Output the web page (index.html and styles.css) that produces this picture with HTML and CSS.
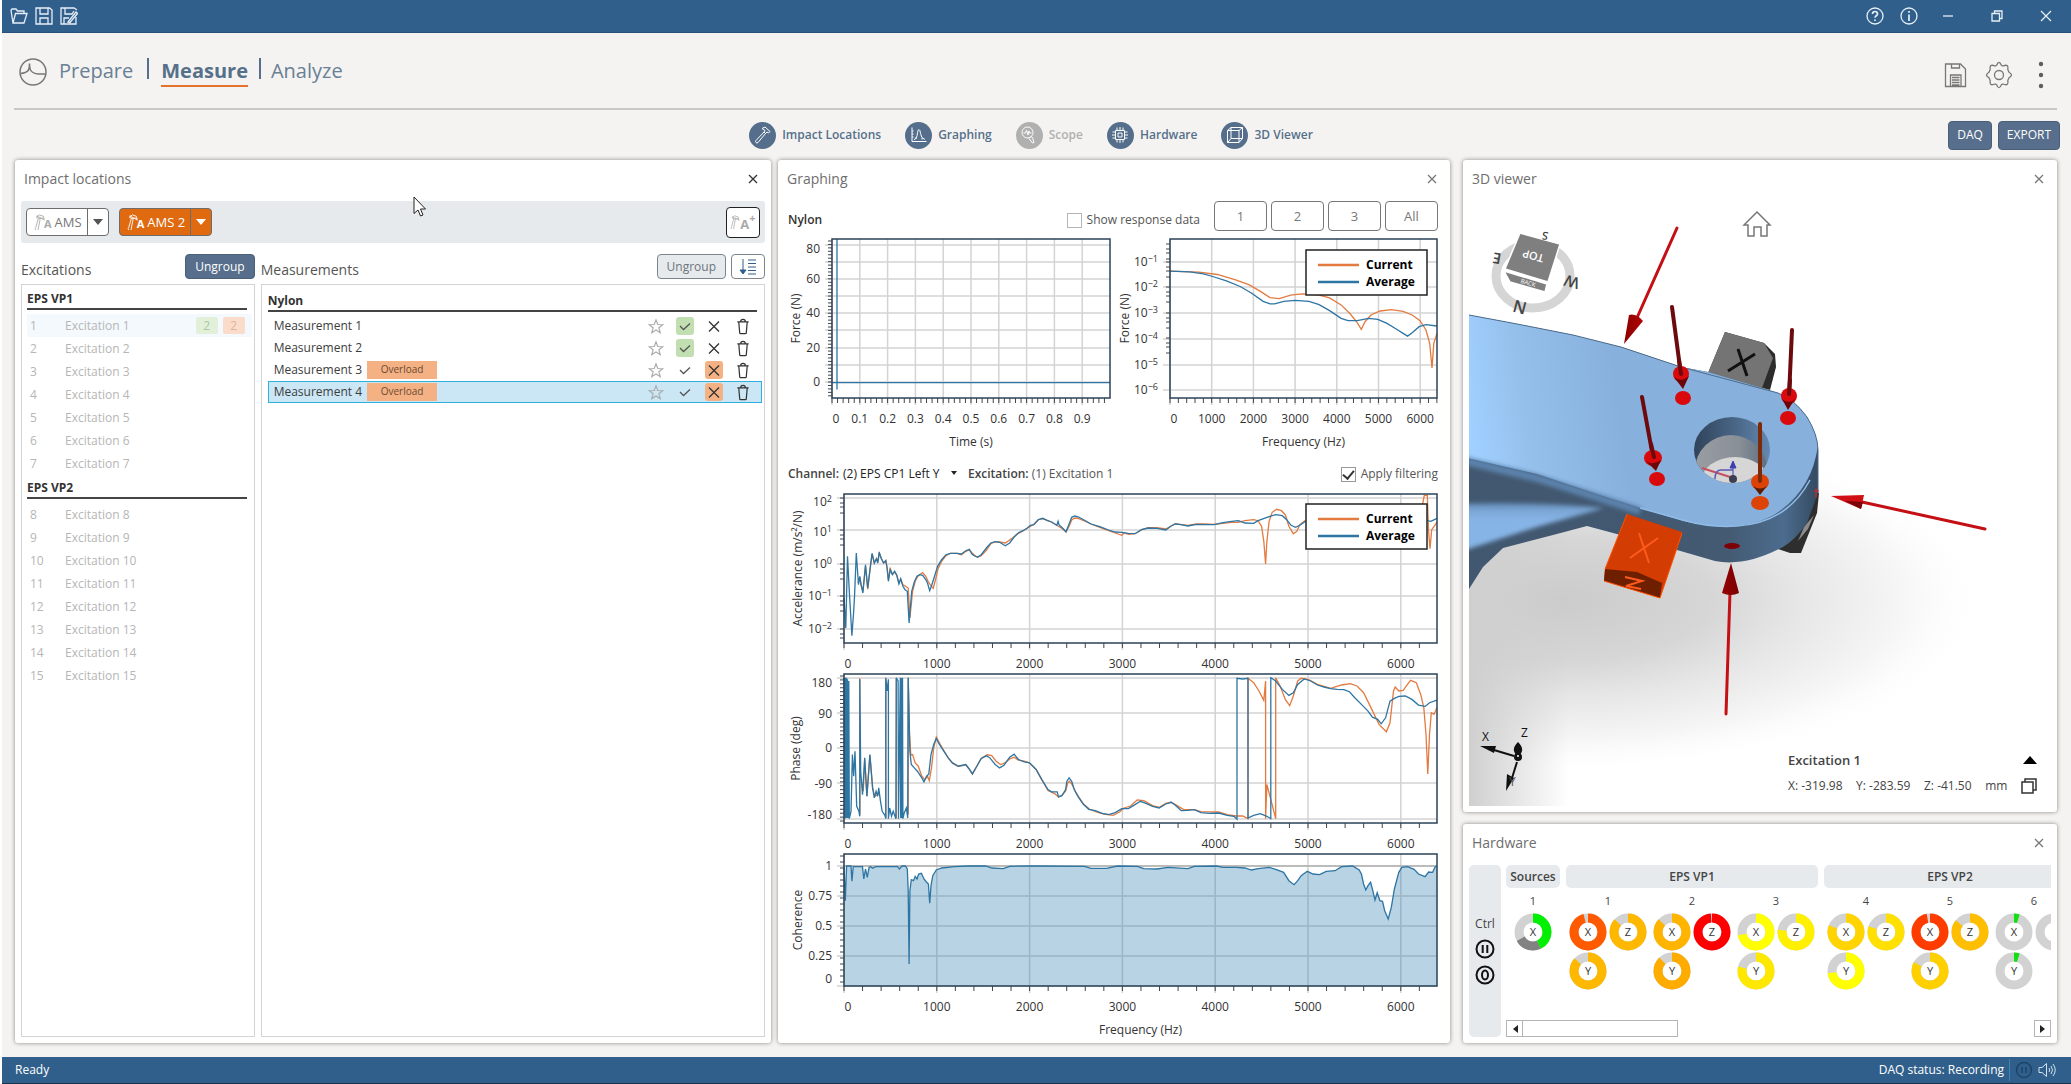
FILE: index.html
```html
<!DOCTYPE html>
<html lang="en">
<head>
<meta charset="utf-8">
<title>Measure</title>
<link rel="stylesheet" href="styles.css">
</head>
<body>
<svg class="defs" aria-hidden="true">
  <symbol id="i-close" viewBox="0 0 10 10"><path d="M1 1l8 8M9 1L1 9"/></symbol>
  <symbol id="i-star" viewBox="0 0 18 18"><path d="M9 1.500l2 5.300 5.600.2-4.400 3.500 1.600 5.500L9 12.900 4.200 16l1.600-5.500L1.400 7l5.600-.2z"/></symbol>
  <symbol id="i-check" viewBox="0 0 16 16"><path d="M3 7.500l3.500 3.500 6.500-6"/></symbol>
  <symbol id="i-cross" viewBox="0 0 16 16"><path d="M3 3l10 10M13 3L3 13"/></symbol>
  <symbol id="i-trash" viewBox="0 0 16 18"><path d="M2 4h12M3.500 4l1 11.500q0 1 1 1h5q1 0 1-1l1-11.500M5.500 4q0-2.500 2.500-2.500t2.500 2.500"/></symbol>
  <symbol id="i-hammer" viewBox="0 0 18 18"><path d="M2 16.500q-1-1 0-2l8-8.500 1.500 1.500-7.500 9q-1 1-2 0zM8 2.500l3-1.500 5 4.500-1.500 1.500-1.500-1-1.500 1.500-1.500-1.500 1-1.500z"/></symbol>
  <symbol id="i-hamA" viewBox="0 0 18 20"><path d="M2 19q-1.500-1.500 0-3L5 5.500M4.500 19L7 6M2.500 4.500L6 2l4.500 1.500 1 3.500-2-1.500-4 .5zM3 3l9 5"/></symbol>
</svg>

<header class="titlebar">
  <div class="tb-group">
    <button class="tb-btn" aria-label="Open"><svg width="18" height="16" viewBox="0 0 18 16"><path d="M3 15L1 2.500 2 1h4l1.500 2H14v2.500M3 15h11l3-9.500H5.500z"/></svg></button>
    <button class="tb-btn" aria-label="Save"><svg width="18" height="18" viewBox="0 0 18 18"><path d="M1 1h13.500L17 3v14H1zM5 1v6h8V1M5 17v-6h8v6"/></svg></button>
    <button class="tb-btn" aria-label="Save as"><svg width="18" height="18" viewBox="0 0 18 18"><path d="M16 10v7H1V1h13l3 2M5 1v6h7l2-3M4 17v-6h5M8 15l8-10 1.500 1.500-7.500 9z"/></svg></button>
  </div>
  <div class="tb-group tb-right">
    <button class="tb-btn" aria-label="Help"><svg width="20" height="20" viewBox="0 0 20 20"><circle cx="10" cy="10" r="8"/><path d="M7.500 8q0-2.500 2.500-2.500T12.500 8q0 1-1.200 1.800T10 11.700M10 13.500v1.500" stroke-width="1.700"/></svg></button>
    <button class="tb-btn tb-info" aria-label="About"><svg width="20" height="20" viewBox="0 0 20 20"><circle cx="10" cy="10" r="8"/><path d="M10 8.500V15M10 5v1.800" stroke-width="1.700"/></svg></button>
    <button class="tb-btn tb-win" aria-label="Minimize"><svg width="12" height="12" viewBox="0 0 12 12"><path d="M1 6h10"/></svg></button>
    <button class="tb-btn tb-win" aria-label="Restore"><svg width="12" height="12" viewBox="0 0 12 12"><path d="M1 3.500h7.500V11H1zM3.500 3.500V1H11v7.500H8.500"/></svg></button>
    <button class="tb-btn tb-win" aria-label="Close"><svg width="12" height="12" viewBox="0 0 12 12"><path d="M1 1l10 10M11 1L1 11"/></svg></button>
  </div>
</header>

<div class="head">
  <nav class="modes">
    <svg class="logo" width="28" height="28" viewBox="0 0 28 28"><circle cx="14" cy="14" r="13"/><path d="M1.500 15.500q6-.5 8-3.500 1-2 1-6.500 0 4.500 1 6.500 2 3.500 8 4h7"/></svg>
    <a href="#">Prepare</a><i></i><a href="#" class="on">Measure</a><i></i><a href="#">Analyze</a>
  </nav>
  <div class="head-tools">
    <button aria-label="Save project"><svg width="24" height="26" viewBox="0 0 24 26"><path d="M1.500 2h15l5 5v17.500h-20zM7.500 2v4h8V2M6.500 24.500V13h10.500v11.500M8 15.500h7.500M8 18h7.500M8 20.500h7.500M8 23h7.500"/></svg></button>
    <button aria-label="Settings"><svg width="28" height="28" viewBox="0 0 28 28"><circle cx="14" cy="14" r="4.500"/><path d="M11.600 4.300Q14-1.500 16.400 4.300L18 5Q24 2.500 22.800 8.500L24 11.200Q29 14 24 16.800L22.800 19.500Q24 25.500 18 23L16.400 23.700Q14 29.500 11.600 23.700L10 23Q4 25.500 5.200 19.500L4 16.800Q-1 14 4 11.200L5.200 8.500Q4 2.500 10 5z"/></svg></button>
    <button class="more" aria-label="More"><svg width="8" height="28" viewBox="0 0 8 28"><g fill="#5e5e5e" stroke="none"><circle cx="4" cy="3" r="2.200"/><circle cx="4" cy="14" r="2.200"/><circle cx="4" cy="25" r="2.200"/></g></svg></button>
  </div>
</div>

<div class="toolbar">
  <div class="views">
    <button><span class="disc"><svg width="18" height="18"><use href="#i-hammer"/></svg></span>Impact Locations</button>
    <button><span class="disc"><svg width="18" height="18" viewBox="0 0 18 18"><path d="M2 1.500v14h14.500M2 5h1.500M2 8h1.500M2 11h1.500M4 13.500q3 0 3.500-7 .5-3 1.500-3t1.500 4q.5 5 4.500 6M6 11v2M12 12v1.500"/></svg></span>Graphing</button>
    <button class="off" disabled><span class="disc"><svg width="18" height="18" viewBox="0 0 18 18"><circle cx="7.500" cy="6.500" r="5.500"/><path d="M11 10.500l1.500 1 1.500 5-1.500.5-3.500-4.500zM3.500 7h2l1-3 1.500 5 1-4 .7 2h1.800"/></svg></span>Scope</button>
    <button><span class="disc"><svg width="18" height="18" viewBox="0 0 18 18"><path d="M4.500 4.500h9v9h-9zM7 7h4v4H7zM6 1.500v3M9 1v3.500M12 1.500v3M6 13.500v3M9 13.500V17M12 13.500v3M1.500 6h3M1 9h3.500M1.500 12h3M13.500 6h3M13.500 9H17M13.500 12h3"/></svg></span>Hardware</button>
    <button><span class="disc"><svg width="18" height="18" viewBox="0 0 18 18"><path d="M1.500 4.500h11.500v12H1.500zM5 1.500h11.500v11H5zM1.500 4.500L5 1.500M13 4.500l3.500-3M1.500 16.500l3.500-4M13 16.500l3.500-4"/></svg></span>3D Viewer</button>
  </div>
  <div class="actions"><button class="solid">DAQ</button><button class="solid">EXPORT</button></div>
</div>

<main class="board">
  <section class="panel">
    <div class="panel-head active"><h2>Impact locations</h2><button aria-label="Close impact locations"><svg width="10" height="10"><use href="#i-close"/></svg></button></div>
    <div class="sets">
      <div class="split"><button><svg width="16" height="18"><use href="#i-hamA"/></svg><b>A</b>AMS</button><button aria-label="AMS menu"><svg width="12" height="8" viewBox="0 0 12 8"><path d="M1 1h10L6 7z"/></svg></button></div>
      <div class="split hot"><button><svg width="16" height="18"><use href="#i-hamA"/></svg><b>A</b>AMS 2</button><button aria-label="AMS 2 menu"><svg width="12" height="8" viewBox="0 0 12 8"><path d="M1 1h10L6 7z"/></svg></button></div>
      <button class="add" aria-label="Add set"><svg width="14" height="18"><use href="#i-hamA"/></svg><b>A</b><sup>+</sup></button>
    </div>
    <div class="lists">
      <div class="col-exc">
        <div class="list-head"><h3>Excitations</h3><button class="solid small">Ungroup</button></div>
        <div class="box">
          <h4>EPS VP1</h4>
          <ol class="exc">
            <li class="cur"><i>1</i>Excitation 1<span class="n ok">2</span><span class="n bad">2</span></li>
            <li><i>2</i>Excitation 2</li><li><i>3</i>Excitation 3</li><li><i>4</i>Excitation 4</li>
            <li><i>5</i>Excitation 5</li><li><i>6</i>Excitation 6</li><li><i>7</i>Excitation 7</li>
          </ol>
          <h4>EPS VP2</h4>
          <ol class="exc">
            <li><i>8</i>Excitation 8</li><li><i>9</i>Excitation 9</li><li><i>10</i>Excitation 10</li><li><i>11</i>Excitation 11</li>
            <li><i>12</i>Excitation 12</li><li><i>13</i>Excitation 13</li><li><i>14</i>Excitation 14</li><li><i>15</i>Excitation 15</li>
          </ol>
        </div>
      </div>
      <div class="col-meas">
        <div class="list-head"><h3>Measurements</h3><button class="flat small">Ungroup</button><button class="sort" aria-label="Sort"><svg width="20" height="18" viewBox="0 0 20 18"><path d="M5 1v14M2 12l3 4 3-4z" fill="#2f5f8b"/><path d="M10 2h8M10 5.500h8M10 9h8M10 12.500h8M10 16h8"/></svg></button></div>
        <div class="box">
          <h4>Nylon</h4>
          <ul class="meas">
            <li>Measurement 1<span class="acts good"><button aria-label="Star"><svg><use href="#i-star"/></svg></button><button aria-label="Accept"><svg><use href="#i-check"/></svg></button><button aria-label="Reject"><svg><use href="#i-cross"/></svg></button><button aria-label="Delete"><svg><use href="#i-trash"/></svg></button></span></li>
            <li>Measurement 2<span class="acts good"><button aria-label="Star"><svg><use href="#i-star"/></svg></button><button aria-label="Accept"><svg><use href="#i-check"/></svg></button><button aria-label="Reject"><svg><use href="#i-cross"/></svg></button><button aria-label="Delete"><svg><use href="#i-trash"/></svg></button></span></li>
            <li>Measurement 3<span class="tag">Overload</span><span class="acts poor"><button aria-label="Star"><svg><use href="#i-star"/></svg></button><button aria-label="Accept"><svg><use href="#i-check"/></svg></button><button aria-label="Reject"><svg><use href="#i-cross"/></svg></button><button aria-label="Delete"><svg><use href="#i-trash"/></svg></button></span></li>
            <li class="sel">Measurement 4<span class="tag">Overload</span><span class="acts poor"><button aria-label="Star"><svg><use href="#i-star"/></svg></button><button aria-label="Accept"><svg><use href="#i-check"/></svg></button><button aria-label="Reject"><svg><use href="#i-cross"/></svg></button><button aria-label="Delete"><svg><use href="#i-trash"/></svg></button></span></li>
          </ul>
        </div>
      </div>
    </div>
  </section>

  <section class="panel">
    <div class="panel-head"><h2>Graphing</h2><button aria-label="Close graphing"><svg width="10" height="10"><use href="#i-close"/></svg></button></div>
    <div class="graphs">
      <div class="g-top">
        <strong>Nylon</strong>
        <label class="check"><input type="checkbox">Show response data</label>
        <div class="pages"><button>1</button><button>2</button><button>3</button><button>All</button></div>
      </div>
      <div class="pair"><svg id="time" class="chart"></svg><svg id="spectrum" class="chart"></svg></div>
      <div class="g-mid">
        <label class="chan"><strong>Channel:</strong><select><option>(2) EPS CP1 Left Y</option></select><svg width="8" height="6" viewBox="0 0 8 6"><path d="M1 0h6L4 4z"/></svg></label>
        <span><strong>Excitation:</strong> (1) Excitation 1</span>
        <label class="check"><input type="checkbox" checked>Apply filtering</label>
      </div>
      <svg id="accelerance" class="chart"></svg>
      <svg id="phase" class="chart"></svg>
      <svg id="coherence" class="chart"></svg>
    </div>
  </section>

  <div class="side">
    <section class="panel">
      <div class="panel-head"><h2>3D viewer</h2><button aria-label="Close 3D viewer"><svg width="10" height="10"><use href="#i-close"/></svg></button></div>
      <div class="scene">
        <svg class="model" viewBox="1469 201 582 605" preserveAspectRatio="xMinYMin slice">
          <defs>
            <linearGradient id="top" x1="1470" y1="420" x2="1620" y2="400" gradientUnits="userSpaceOnUse"><stop offset="0" stop-color="#a0d0ff"/><stop offset=".35" stop-color="#96c0ec"/><stop offset="1" stop-color="#87b0dc"/></linearGradient>
            <linearGradient id="rim" x1="1590" y1="0" x2="1818" y2="0" gradientUnits="userSpaceOnUse"><stop offset="0" stop-color="#425870"/><stop offset=".6" stop-color="#445a72"/><stop offset=".85" stop-color="#4c6c8e"/><stop offset="1" stop-color="#344a60"/></linearGradient>
            <linearGradient id="wall" x1="1694" y1="0" x2="1770" y2="0" gradientUnits="userSpaceOnUse"><stop offset="0" stop-color="#30435a"/><stop offset=".6" stop-color="#4c6a8b"/><stop offset="1" stop-color="#6488b0"/></linearGradient>
            <linearGradient id="bore" x1="1694" y1="0" x2="1770" y2="0" gradientUnits="userSpaceOnUse"><stop offset="0" stop-color="#9a9ea2"/><stop offset=".6" stop-color="#888f97"/><stop offset="1" stop-color="#5b6b7c"/></linearGradient>
            <linearGradient id="wedge" x1="0" y1="500" x2="0" y2="520" gradientUnits="userSpaceOnUse"><stop offset="0" stop-color="#5479a2"/><stop offset=".5" stop-color="#7aa5d4"/><stop offset="1" stop-color="#86b4e6"/></linearGradient>
            <linearGradient id="red" x1="0" x2="1"><stop offset="0" stop-color="#8a0000"/><stop offset=".4" stop-color="#e80d0d"/><stop offset="1" stop-color="#7a0000"/></linearGradient>
            <radialGradient id="shade"><stop offset="0" stop-color="#cbcbcb"/><stop offset=".35" stop-color="#d6d6d6"/><stop offset=".55" stop-color="#e6e6e6"/><stop offset=".8" stop-color="#f6f6f6"/><stop offset="1" stop-color="#fff" stop-opacity="0"/></radialGradient>
            <linearGradient id="haze"><stop offset="0" stop-color="#cfcfcf"/><stop offset="1" stop-color="#cfcfcf" stop-opacity="0"/></linearGradient>
            <filter id="soft" x="-10%" y="-20%" width="120%" height="140%"><feGaussianBlur stdDeviation="2"/></filter>
            <clipPath id="hole"><ellipse cx="1732" cy="450" rx="38" ry="33"/></clipPath>
            <clipPath id="face"><path d="M1469 315L1512 323 1573 335 1621 347 1681 367 1708 372 1762 388 1778 393Q1794 399 1807 417 1818 435 1818 450V493L1807 523Q1795 540 1783 547 1745 567 1715 561L1677 550 1613 533 1587 526 1553 535 1503 548 1483 567 1469 589z"/></clipPath>
          </defs>
          <ellipse cx="1560" cy="600" rx="430" ry="175" fill="url(#shade)"/>
          <rect x="1469" y="520" width="100" height="290" fill="url(#haze)"/>
          <path d="M1469 201H2051V480H1840L1790 380 1600 320 1469 310z" fill="#fff"/>
          <path d="M1725 332L1764 343 1775 354 1776 367 1770 390 1708 373z" fill="#2c2c2c"/>
          <path d="M1725 332L1764 343 1773 358 1762 388 1708 373z" fill="#747474"/>
          <path d="M1738 349l9 27M1755 354l-27 17" class="mark"/>
          <path d="M1815 491l4 2-2 20-16 40h-11l-12-4z" fill="#2e2e2e"/><path d="M1814 515l-6 14-10 12 6-14z" fill="#8b8b8b"/>
          <g clip-path="url(#face)">
            <rect x="1469" y="300" width="360" height="300" fill="url(#rim)"/>
            <path d="M1440 504Q1540 501 1604 508L1540 526 1440 558z" fill="url(#wedge)" filter="url(#soft)"/>
            <path d="M1440 280V452L1537 474 1603 496 1650 511 1683 521Q1737 534 1772 516 1812 492 1818 445L1815 410 1780 370 1600 300z" fill="url(#top)"/>
            <path d="M1440 455L1537 478 1603 499 1640 511" stroke="#5c83ad" stroke-width="8" fill="none" filter="url(#soft)"/>
            <path d="M1640 508l43 12q27 8 54 6 50-3 73-46" stroke="#8fbbe8" stroke-width="1.500" fill="none"/>
          </g>
          <path d="M1469 315L1512 323 1573 335 1621 347 1681 367 1778 393Q1794 399 1807 417 1818 435 1818 450V493" fill="none" stroke="#4f6d8d"/>
          <g clip-path="url(#hole)">
            <rect x="1690" y="410" width="84" height="80" fill="url(#wall)"/>
            <ellipse cx="1731" cy="470" rx="36" ry="35" fill="url(#bore)"/>
            <ellipse cx="1735" cy="482" rx="34" ry="25" fill="#d6d6d6"/>
            <path d="M1702 468l28 9" stroke="#c65060" stroke-width="2"/>
            <path d="M1715 479q0-9 6-9h12" stroke="#5a5ab8" fill="none" stroke-width="1.500"/>
            <path d="M1733 476v-14M1730 468l3-7 3 7z" stroke="#4040b0" fill="#4040b0"/><circle cx="1733" cy="479" r="4" fill="#3c3f50"/>
          </g>
          <ellipse cx="1732" cy="546" rx="8" ry="3" fill="#7d0008"/><path d="M1814 491h5M1816 488v10" stroke="#d22"/>
          <path d="M1627 514L1682 532V534L1660 598 1604 581 1605 569z" fill="#d33c02"/>
          <path d="M1605 569L1637 572 1662 583 1660 598 1604 581z" fill="#6e1f00"/>
          <path d="M1682 533L1660 598 1604 581M1605 569l22-55" stroke="#ff5200" fill="none"/>
          <path d="M1639 533l10 30M1658 538l-28 20M1625 577l17 4-16 5 15 3" stroke="#ff5a1e" stroke-width="2" fill="none"/>
          <g class="stick"><path d="M1672 307l9 68M1792 330l-3 66M1642 397l11 60"/></g>
          <g fill="#d9090c"><ellipse cx="1681" cy="374" rx="8" ry="8"/><ellipse cx="1683" cy="398" rx="8" ry="7"/><ellipse cx="1789" cy="396" rx="8" ry="8"/><ellipse cx="1788" cy="418" rx="8" ry="7"/><ellipse cx="1653" cy="458" rx="9" ry="8"/><ellipse cx="1657" cy="479" rx="8" ry="7"/></g>
          <path d="M1674 377l9 12 6-13q-8 7-15 1zM1782 399l6 11 7-11q-6 6-13 0zM1646 461l10 10 5-11q-8 6-15 1z" fill="#6d0508"/>
          <g class="stick"><path d="M1679 360l2 14M1790 380l-1 14M1651 444l3 13"/></g>
          <ellipse cx="1760" cy="482" rx="9" ry="8" fill="#dd4306"/><ellipse cx="1760" cy="503" rx="9" ry="7" fill="#dd4306"/><path d="M1753 486l7 9 7-9q-7 5-14 0z" fill="#5e1c02"/><path d="M1760 424v57" stroke="#7e2a08" stroke-width="4" stroke-linecap="round"/>
          <g stroke="#c40f14" stroke-width="3" stroke-linecap="round"><path d="M1677 228l-41 92M1862 502l123 27M1730 592l-4 122"/></g>
          <g fill="url(#red)"><path d="M1629 315q7-2 14 6l-19 23zM1722 593l9-30 8 30q-8 4-17 0z"/></g>
          <path d="M1831 496l33-1-3 14z" fill="#d01014"/><path d="M1845 501l16 8 2-7z" fill="#7a0408"/>
          <g>
            <ellipse cx="1533" cy="276" rx="37" ry="32" fill="none" stroke="#d5d5d5" stroke-width="9"/>
            <path d="M1520 233L1560 244 1548 282 1505 269zM1504 271L1547 284 1545 292 1510 282z" fill="#7f7f7f" stroke="#fff" stroke-width="1.500"/>
            <text class="cube" x="1533" y="256" transform="rotate(195 1533 256)" dy="4" fill="#fff" font-size="11" font-weight="600">TOP</text>
            <text class="cube" x="1528" y="283" transform="rotate(17 1528 283)" dy="2" fill="#fff" font-size="6">BACK</text>
            <g fill="#444" font-size="15" font-weight="600"><text class="cube" x="1545" y="236" transform="rotate(190 1545 236)" dy="4" font-size="11">S</text><text class="cube" x="1497" y="258" transform="rotate(190 1497 258)" dy="5">E</text><text class="cube" x="1572" y="281" transform="rotate(195 1572 281)" dy="5" font-size="16">W</text><text class="cube" x="1520" y="306" transform="rotate(195 1520 306)" dy="5" font-size="17">N</text></g>
          </g>
          <path d="M1744 225l13-13 13 13h-3v11h-6v-9h-7v9h-6v-11z" fill="#fff" stroke="#777" stroke-width="1.500"/>
          <g fill="#111"><path d="M1518 742q5 5 4 9t-4 4-4-4 4-9zM1480 746l16 0-2 7zM1507 774l7 4-8 13z"/><path d="M1494 750l20 6M1517 762l-5 16" stroke="#111" stroke-width="2"/><circle cx="1518" cy="757" r="4"/><circle cx="1518" cy="756" r="1" fill="#fff"/>
          <text x="1482" y="741" font-size="12">X</text><text x="1521" y="737" font-size="12">Z</text><text x="1509" y="786" font-size="12" fill="#555">Y</text></g>
        </svg>
        <div class="readout">
          <div><strong>Excitation 1</strong><svg width="14" height="8" viewBox="0 0 14 8"><path d="M0 8l7-8 7 8z"/></svg></div>
          <div class="xyz"><span>X: -319.98</span><span>Y: -283.59</span><span>Z: -41.50</span><span>mm</span><svg width="16" height="16" viewBox="0 0 16 16"><path d="M1 4h11v11H1zM4 4V1h11v11h-3" fill="none" stroke="#333" stroke-width="1.500"/></svg></div>
        </div>
      </div>
    </section>
    <section class="panel hw">
      <div class="panel-head"><h2>Hardware</h2><button aria-label="Close hardware"><svg width="10" height="10"><use href="#i-close"/></svg></button></div>
      <div class="hw-body">
        <div class="ctrl"><span>Ctrl</span>
          <button aria-label="Pause"><svg width="20" height="20" viewBox="0 0 20 20"><circle cx="10" cy="10" r="8.500"/><path d="M7.700 6v8M12.300 6v8"/></svg></button>
          <button aria-label="Zero"><svg width="20" height="20" viewBox="0 0 20 20"><circle cx="10" cy="10" r="8.500"/><ellipse cx="10" cy="10" rx="3" ry="4.500"/></svg></button>
        </div>
        <div class="hw-main">
          <div class="groups" id="groups"></div>
          <div class="scroll"><button aria-label="Scroll left"><svg width="6" height="8" viewBox="0 0 6 8"><path d="M6 0v8L1 4z"/></svg></button><span class="thumb"></span><button aria-label="Scroll right"><svg width="6" height="8" viewBox="0 0 6 8"><path d="M0 0v8l5-4z"/></svg></button></div>
        </div>
      </div>
    </section>
  </div>
</main>

<footer class="status"><span>Ready</span><span class="daq">DAQ status: Recording</span>
  <svg width="18" height="18" viewBox="0 0 18 18" stroke="#1d4468" stroke-width="1.500"><circle cx="9" cy="9" r="7.500"/><path d="M7 6v6M11 6v6"/></svg>
  <svg width="18" height="16" viewBox="0 0 18 16" stroke="#cfe0ee"><path d="M1 5.500h3L8.500 1.500v13L4 10.500H1zM11 6q1.500 2 0 4M13 4q3 4 0 8M15 2q4.500 6 0 12"/></svg>
</footer>
<svg class="pointer" width="14" height="22" viewBox="0 0 14 22"><path d="M1 1v16.500l4-3.500 2.500 6 2.500-1L7.500 13H12.500z" fill="#fff" stroke="#222"/></svg>
<script src="charts.js"></script>
</body>
</html>
```
FILE: styles.css
```css
* { box-sizing: border-box; }
body {
  margin: 0;
  min-height: 100vh;
  display: flex;
  flex-direction: column;
  background: #f4f3f1;
  border-left: 2px solid #fff;
  color: #444;
  font: 13px/18px "Open Sans", "Noto Sans", sans-serif;
}
h2, h3, h4, ul, ol { margin: 0; padding: 0; font-weight: 400; list-style: none; }
i { font-style: normal; }
strong { font-weight: 600; }
button { font: inherit; color: inherit; margin: 0; padding: 0; border: 0; background: none; display: flex; align-items: center; justify-content: center; }
svg { display: block; fill: none; flex: none; }
.defs { position: absolute; width: 0; height: 0; }

.titlebar { height: 33px; background: #305f8b; border-bottom: 1px solid #2a527a; display: flex; align-items: center; justify-content: space-between; padding: 0 12px 0 8px; }
.tb-group { display: flex; align-items: center; gap: 7px; }
.tb-btn svg { stroke: #e6eff7; stroke-width: 1.300; }
.tb-right { gap: 0; }
.tb-info { margin: 0 4px 0 14px; }
.tb-win { width: 49px; }
.tb-win:last-child { width: 26px; margin-left: 12px; }

.head { height: 77px; margin: 0 14px 0 12px; padding-top: 8px; border-bottom: 2px solid #c8c7c6; display: flex; align-items: center; justify-content: space-between; }
.modes { display: flex; align-items: center; padding-bottom: 6px; font-size: 20px; line-height: 28px; }
.modes a { color: #6a8094; text-decoration: none; border-bottom: 2px solid transparent; }
.modes a.on { font-weight: 700; color: #56708a; border-color: #e5722c; }
.modes i { width: 2px; height: 21px; margin: 0 12px 6px 14px; background: #56708a; }
.modes .on + i { margin-left: 11px; margin-right: 10px; }
.logo { stroke: #777; stroke-width: 1.500; margin: 0 12px 0 5px; }
.head-tools { display: flex; gap: 17px; padding-right: 12px; }
.head-tools svg { stroke: #777; stroke-width: 1.300; }
.head-tools .more { margin-left: 7px; }

.toolbar { height: 50px; padding: 0 11px 0 0; display: grid; grid-template-columns: 1fr auto 1fr; align-items: center; font-size: 12px; }
.views { grid-column: 2; display: flex; gap: 24px; font-weight: 600; color: #56708a; }
.views button { gap: 6px; }
.disc { width: 27px; height: 27px; border-radius: 50%; background: #546e8b; display: grid; place-items: center; stroke: #fff; }
.off { color: #b0b0b0; }
.off .disc { background: #b0b0b0; }
.actions { display: flex; gap: 6px; justify-content: flex-end; }
.solid { height: 29px; padding: 0 8px; border: 1px solid #4a6078; border-radius: 4px; background: #576f8c; color: #fff; }

.board { flex: 1; display: grid; grid-template-columns: 756fr 672fr 600fr; gap: 7px; padding: 0 14px 14px 13px; }
.panel { background: #fff; border-radius: 3px; box-shadow: 0 0 4px rgba(0,0,0,.45); display: flex; flex-direction: column; padding: 0 6px 6px; min-width: 0; }
.panel-head { height: 41px; padding: 0 7px 3px 3px; display: flex; align-items: center; justify-content: space-between; color: #6e6e6e; }
.panel-head h2 { font-size: 14px; line-height: 20px; }
.panel-head svg { stroke: #777; stroke-width: 1.300; }
.active svg { stroke: #333; }
.side { display: flex; flex-direction: column; gap: 12px; padding-left: 6px; min-width: 0; }
.side > :first-child { flex: 1; }

.sets { height: 42px; padding: 0 5px; border-radius: 3px; background: #e6eaed; display: flex; align-items: center; gap: 10px; }
.split { display: flex; height: 28px; border: 1px solid #6d6d6d; border-radius: 4px; background: #fff; color: #777; }
.split button:first-child { padding: 0 5px 0 7px; }
.split button + button { width: 21px; border-left: 1px solid #6d6d6d; }
.split button + button svg { fill: #555; }
.sets b { align-self: flex-end; margin: 0 3px 2px -6px; font-size: 11px; color: #aaa; }
.sets use { stroke: #aaa; }
.hot { background: #e06a10; color: #fff; }
.sets .hot b { color: #fff; }
.hot use { stroke: #fff; }
.split.hot button + button svg { fill: #fff; }
.add { width: 34px; height: 31px; margin-left: auto; border: 1px solid #222; border-radius: 4px; background: #fff; }
.sets .add b { margin: 0 0 4px -4px; font-size: 13px; }
.add sup { font-size: 11px; line-height: 10px; color: #aaa; align-self: flex-start; padding-top: 5px; font-weight: 700; }

.lists { flex: 1; display: grid; grid-template-columns: 234fr 505fr; gap: 6px; }
.col-exc, .col-meas { display: flex; flex-direction: column; min-width: 0; }
.list-head { height: 41px; display: flex; align-items: center; gap: 5px; }
.list-head h3 { flex: 1; font-size: 14px; line-height: 20px; padding-top: 12px; color: #555; }
.small { height: 25px; padding: 0 9px; margin-top: 6px; font-size: 12px; }
.flat { border: 1px solid #7c858e; border-radius: 4px; background: #e6eaed; color: #6d747a; }
.sort { width: 34px; height: 25px; margin-top: 6px; border: 1px solid #7c858e; border-radius: 4px; stroke: #2f5f8b; }
.box { flex: 1; border: 1px solid #d4d4d4; padding: 5px 2px 0 5px; }
.box h4 { margin-right: 5px; font-size: 12px; font-weight: 700; border-bottom: 2px solid #444; color: #333; }
.exc { padding: 4px 0 4px; font-size: 12px; color: #b6b6b6; }
.exc li { height: 23px; padding: 0 7px 0 3px; display: flex; align-items: center; }
.exc i { width: 35px; }
.cur { background: #f3f9fd; }
.n { width: 22px; height: 17px; margin-left: 5px; border-radius: 2px; line-height: 17px; text-align: center; background: #fbdccb; color: #e0b39a; }
.n.ok { margin-left: auto; background: #e2f0d9; color: #afc79f; }
.col-meas .box { padding-left: 6px; }
.col-meas .box h4 { padding-top: 2px; }
.meas { padding-top: 3px; color: #3d3d3d; font-size: 12px; }
.meas li { height: 22px; padding: 0 10px 0 6px; display: flex; align-items: center; }
.meas .sel { background: #cbe7f5; outline: 1px solid #2fb0dc; outline-offset: -1px; }
.tag { width: 70px; height: 18px; margin-left: 5px; line-height: 17px; background: #f4b183; font-size: 10px; text-align: center; color: #6b4a35; }
.acts { margin-left: auto; display: flex; gap: 11px; }
.acts button { width: 18px; height: 18px; border-radius: 3px; stroke: #333; }
.acts svg { width: 16px; height: 17px; stroke-width: 1.300; }
.acts button:first-child { stroke: #aaa; }
.acts button:nth-child(2) { stroke: #555; }
.good button:nth-child(2) { background: #c1dfb0; }
.poor button:nth-child(3) { background: #f4b183; }

.graphs { padding: 0 6px 0 4px; color: #555; }
.g-top { height: 34px; display: flex; align-items: flex-start; gap: 14px; }
.g-top strong { margin: 10px auto 0 0; color: #333; font-size: 12px; }
.g-top .check { margin-top: 10px; }
.check { display: flex; align-items: center; gap: 5px; font-size: 12px; }
.check input { appearance: none; margin: 0; width: 15px; height: 15px; border: 1px solid #b5b5b5; background: #fff; }
.check input:checked { display: grid; place-items: center; border-color: #999; }
.check input:checked::before { content: ""; width: 5px; height: 9px; margin-bottom: 3px; border: solid #333; border-width: 0 2px 2px 0; rotate: 40deg; }
.pages { display: flex; gap: 4px; }
.pages button { width: 53px; height: 30px; border: 1px solid #777; border-radius: 4px; background: #fff; color: #777; }
.pair { display: grid; grid-template-columns: 330fr 320fr; }
.chart { width: 100%; height: auto; overflow: visible; }
.g-mid { height: 30px; padding-top: 4px; display: flex; align-items: center; gap: 10px; font-size: 12px; }
.g-mid strong { color: #444; }
.chan { display: flex; align-items: center; gap: 4px; }
.chan svg { fill: #222; }
.g-mid select { appearance: none; border: 0; padding: 0 6px 0 0; background: none; font: inherit; color: #222; }
.g-mid .check { margin-left: auto; }
.chart text { font-size: 12px; fill: #333; stroke: none; }
.chart .legend { font-weight: 700; font-size: 12px; fill: #000; }
.chart .exp { font-size: 9px; }
.frame { stroke: #2b4257; stroke-width: 1.500; }
.grid { stroke: #d3d3d3; stroke-width: 1.500; }
.tick { stroke: #444; }
.current { stroke: #e37a3f; stroke-width: 1.300; }
.average { stroke: #2d75a3; stroke-width: 1.300; }
.swatch { stroke-width: 2.500; }
.area { fill: rgba(31,119,170,.32); }
.key { fill: #fff; stroke: #222; stroke-width: 1.500; }

.scene { flex: 1; position: relative; min-height: 400px; }
.model { position: absolute; inset: 0; width: 100%; height: 100%; }
.mark { stroke: #111; stroke-width: 3; }
.stick { stroke: #6d0a0d; stroke-width: 4; stroke-linecap: round; }
.cube { text-anchor: middle; }
.readout { position: absolute; right: 14px; bottom: 11px; width: 249px; color: #444; display: flex; flex-direction: column; gap: 8px; }
.readout div { display: flex; align-items: center; justify-content: space-between; }
.readout strong { font-size: 13px; }
.readout div > svg { fill: #000; }
.readout .xyz { font-size: 12px; }

.hw-body { display: flex; gap: 5px; height: 172px; }
.ctrl { width: 32px; border-radius: 5px; background: #e6eaed; display: flex; flex-direction: column; align-items: center; justify-content: center; gap: 6px; padding-bottom: 3px; font-size: 12px; }
.ctrl svg { stroke: #111; stroke-width: 2; }
.hw-main { flex: 1; min-width: 0; display: flex; flex-direction: column; justify-content: space-between; }
.groups { display: flex; gap: 6px; overflow: hidden; }
.group { flex: none; }
.group h3 { height: 23px; padding: 0 3px; border-radius: 5px; background: #e6eaed; text-align: center; font-size: 12px; line-height: 23px; font-weight: 600; }
.slots { display: flex; }
.slot { width: 84px; display: grid; grid-template-columns: 40px 40px; grid-template-rows: 25px; grid-auto-rows: 39px; justify-content: center; justify-items: center; }
.slot b { grid-column: 1 / -1; margin-top: 4px; font-size: 11px; font-weight: 400; line-height: 18px; }
.slot .y { grid-column: 1; }
.slot.one { width: 54px; grid-template-columns: 40px; }
.ring text { font-size: 11px; fill: #333; text-anchor: middle; }
.scroll { height: 17px; display: flex; }
.scroll button { width: 17px; border: 1px solid #b5b5b5; }
.scroll svg { fill: #222; }
.thumb { width: 155px; margin-right: auto; border: 1px solid #b5b5b5; border-left: 0; }

.status { height: 27px; padding: 0 15px 0 13px; background: #305f8b; border-bottom: 1px solid #16324c; color: #fff; display: flex; align-items: center; gap: 5px; font-size: 12px; }
.daq { margin-left: auto; padding-right: 5px; border-right: 1px solid #3c86c0; line-height: 22px; }
.pointer { position: absolute; left: 413px; top: 196px; }
```
FILE: charts.js
```js
// Traces are stored on the digitised grid given by `grid` and mapped to the plot box.
const hz = (first, step) => [0, 1, 2, 3, 4, 5, 6].map(n => [n ? n * 1000 : 0, first + n * step]);
const text = (x, y, s, extra = "") => `<text x="${x}" y="${y}" ${extra}>${s}</text>`;
const power = n => `10<tspan class="exp" dy="-4">${n < 0 ? "\u2212" + -n : n}</tspan>`;

function chart(id, c) {
  const [x0, y0, x1, y1] = c.box, [gx0, gy0, gx1, gy1] = c.grid;
  const X = x => (x0 + (x - gx0) * (x1 - x0) / (gx1 - gx0)).toFixed(1);
  const Y = y => (y0 + (y - gy0) * (y1 - y0) / (gy1 - gy0)).toFixed(1);
  let s = "";
  for (const [l, x] of c.xs) {
    s += `<path class="grid" d="M${x} ${y0}V${y1 + 7}"/>` + text(l === 0 ? x + 4 : x, y1 + 25, l, 'text-anchor="middle"');
  }
  for (const [l, y, ly] of c.ys) {
    s += `<path class="grid" d="M${x0 - 7} ${y}H${x1}"/>`;
    if (l !== "") s += text(x0 - 12, (ly || y) + 4, l, 'text-anchor="end"');
  }
  for (let x = x0; x <= x1; x += c.xt) s += `<path class="tick" d="M${x} ${y1}v5"/>`;
  if (c.yt) for (let y = y0 + 2; y < y1; y += c.yt) s += `<path class="tick" d="M${x0} ${y}h-4"/>`;
  for (const y of c.logs || []) for (const k of [0, 5, 9, 15]) if (y + k < y1) s += `<path class="tick" d="M${x0} ${y + k}h-4"/>`;
  for (const [cls, pts] of c.traces) {
    const d = pts.split("|").map(p => "M" + p.trim().split(/\s+/).map(q => { const [a, b] = q.split(","); return X(a) + " " + Y(b); }).join("L")).join("");
    if (c.area) s += `<path class="area" d="${d}V${y1}H${x0}z"/><path stroke="#999" d="M${x0} ${c.ys[0][1]}H${x1}"/>`;
    s += `<path class="${cls}" d="${d}"/>`;
  }
  s += `<rect class="frame" x="${x0}" y="${y0}" width="${x1 - x0}" height="${y1 - y0}"/>`;
  const my = (y0 + y1) / 2;
  s += text(c.titleX, my, c.title, `text-anchor="middle" transform="rotate(-90 ${c.titleX} ${my})"`);
  if (c.foot) s += text((x0 + x1) / 2, y1 + 48, c.foot, 'text-anchor="middle"');
  if (c.legend) {
    const [lx, ly] = c.legend;
    s += `<rect class="key" x="${lx}" y="${ly}" width="121" height="45"/><path class="current swatch" d="M${lx + 12} ${ly + 15}h41"/><path class="average swatch" d="M${lx + 12} ${ly + 32}h41"/>`;
    s += text(lx + 60, ly + 19, "Current", 'class="legend"') + text(lx + 60, ly + 36, "Average", 'class="legend"');
  }
  const el = document.getElementById(id);
  el.setAttribute("viewBox", `0 0 ${c.size[0]} ${c.size[1]}`);
  el.innerHTML = s;
}

chart("time", {
  size: [330, 222], box: [44, 4, 322, 163], grid: [200, 718, 806, 1193], xt: 5.56, yt: 3.44, title: "Force (N)", titleX: 12, foot: "Time (s)",
  xs: [0, 1, 2, 3, 4, 5, 6, 7, 8, 9].map(n => [n ? "0." + n : 0, 44 + n * 27.8]),
  ys: [[80, 10, 14], ["", 27], [60, 44], ["", 61], [40, 78], ["", 95], [20, 113], ["", 130], [0, 147]],
  traces: [["average", "211,718 211,1168|200,1147 806,1147"]]
});
chart("spectrum", {
  size: [320, 215], box: [52, 4, 319, 163], grid: [937, 718, 1519, 1193], xt: 8.34, logs: [9, 27, 52, 78, 103], title: "Force (N)", titleX: 11, foot: "Frequency (Hz)", legend: [188, 15],
  xs: hz(52, 41.7),
  ys: [[power(-1), 27], [power(-2), 52], [power(-3), 78], [power(-4), 104], [power(-5), 130], [power(-6), 155]],
  traces: [
    ["current", "937,814 1000,817 1040,824 1080,840 1110,855 1135,875 1155,893 1175,896 1200,886 1225,882 1260,885 1285,894 1310,915 1330,942 1345,968 1354,988 1362,965 1375,945 1395,933 1420,929 1445,934 1465,945 1482,962 1495,990 1503,1030 1508,1103 1512,1030 1519,1000"],
    ["average", "937,814 980,816 1010,822 1030,830 1060,843 1090,860 1115,880 1140,904 1155,912 1165,912 1185,904 1210,901 1240,904 1262,914 1285,932 1310,955 1325,962 1345,962 1370,955 1390,958 1410,970 1430,987 1445,1000 1455,1008 1465,998 1480,980 1495,974 1519,978"]
  ]
});
chart("accelerance", {
  size: [650, 182], box: [56, 7, 649, 156], grid: [168, 128, 1517, 575], xt: 18.56, logs: [11, 43, 77, 109, 142], title: "Accelerance (m/s²/N)", titleX: 14, legend: [518, 17],
  xs: hz(56, 92.8),
  ys: [[power(2), 11, 15], [power(1), 43, 45], [power(0), 77], [power(-1), 109], [power(-2), 142]],
  traces: [
    ["current", "200,395 204,378 207,402 211,420 217,345 222,414 228,345 232,308 237,335 242,322 245,333 248,305 253,322 258,335 263,328 266,350 269,385 273,352 278,368 283,362 288,372 293,395 297,384 302,400 308,405 314,410 318,500 324,420 330,390 336,375 342,368 347,364 354,375 360,392 366,403 371,411 377,380 382,352 390,330 400,313 410,306 425,306 435,310 445,300 453,296 459,304 465,312 472,318 480,313 492,297 502,277 512,271 522,272 535,275 545,266 555,256 565,246 575,239 585,231 600,219 610,205 620,202 630,207 640,212 652,222 665,232 673,242 680,225 686,206 693,200 702,202 715,209 730,218 750,228 770,238 785,245 800,252 805,245 815,249 830,247 845,235 860,229 880,229 900,233 912,224 922,217 935,220 950,222 970,218 990,218 1010,219 1030,216 1050,213 1065,213 1080,208 1100,205 1110,208 1118,225 1123,270 1127,338 1130,270 1135,210 1142,183 1152,174 1163,178 1172,190 1180,225 1190,247 1198,240 1205,220 1218,207|1484,160 1488,132 1495,132 1498,240 1501,292 1505,235 1512,222 1517,212"],
    ["average", "168,440 172,530 176,315 180,420 186,553 190,480 192,430 196,305 201,400 204,375 207,400 211,425 217,340 222,410 228,345 232,306 237,335 242,322 245,335 248,303 253,322 258,335 263,328 266,350 269,390 273,355 278,370 283,360 288,372 293,398 297,382 302,405 307,415 312,420 316,515 322,420 328,392 334,375 340,370 347,372 354,385 358,395 363,418 368,400 375,370 381,345 390,325 400,310 410,306 425,306 435,308 445,298 453,294 459,308 465,314 472,317 480,310 492,290 502,275 512,271 522,273 535,283 545,275 555,257 565,244 575,238 585,230 592,222 600,220 610,205 620,201 630,207 640,212 652,222 655,210 657,220 665,230 673,241 680,218 686,198 693,194 702,197 715,207 730,218 750,226 770,236 785,242 800,243 815,246 830,247 845,235 860,230 880,231 900,236 912,224 922,218 935,220 950,224 970,219 990,220 1010,220 1030,214 1050,210 1065,208 1080,215 1100,216 1110,208 1130,198 1150,190 1165,193 1175,205 1185,222 1195,228 1205,222 1218,210|1495,208 1503,210 1517,201"]
  ]
});
chart("phase", {
  size: [650, 180], box: [56, 5, 649, 154], grid: [168, 669, 1517, 1115], xt: 18.56, yt: 3.92, title: "Phase (deg)", titleX: 12,
  xs: hz(56, 92.8),
  ys: [[180, 9, 14], [90, 44, 45], [0, 79], [-90, 114, 115], [-180, 150, 146]],
  traces: [
    ["current", "204,1090 204,682|212,1020 215,925 220,1035 227,912 233,1010 238,1035 245,1030|263,1100 263,682|287,1100 287,682|299,1100 299,682|314,1090 314,680 317,850 320,912 324,910 330,935 337,945 345,975 352,985 358,975 362,988 367,950 372,890 378,858 385,875 395,898 405,920 415,937 428,945 445,941 452,952 460,968 470,945 480,922 494,911 504,913 514,930 524,940 534,935 545,923 555,918 565,927 578,930 590,935 605,955 618,985 632,1018 648,1028 656,1037 664,1032 672,1020 677,995 681,990 687,1000 694,1020 702,1037 714,1060 727,1074 742,1082 760,1088 780,1092 795,1082 805,1070 820,1064 835,1046 850,1048 870,1063 885,1068 900,1056 912,1053 922,1060 940,1074 965,1075 980,1081 1020,1082 1040,1090 1060,1094 1075,1094 1087,1102 1087,682 1100,695 1112,720 1123,748 1127,690 1127,1102 1130,1000 1140,1050 1150,1102 1150,680 1160,705 1172,745 1182,764 1190,735 1200,690 1208,682 1225,686 1245,700 1275,712 1300,702 1320,698 1335,705 1350,725 1365,765 1385,820 1402,842 1410,815 1418,720 1422,708 1430,720 1440,718 1450,700 1457,688 1470,695 1480,730 1487,770 1492,850 1496,968 1500,850 1504,785 1510,790 1517,770"],
    ["average", "168,680 170,1102 171,680 173,1100 174,680 175,1100 176,685 178,1100 179,690 180,1102 184,1080 187,910 190,975 193,900 197,1065 202,1080 204,1095 204,685 206,960 210,1030 215,920 220,1035 227,910 233,1010 237,1040 241,1020 245,1035 247,1010 251,1050 255,1080 261,1092 263,1102 263,680 266,720 269,685 269,1102 272,1070 276,1095 280,1080 286,1102 287,680 291,690 292,1102 296,680 297,1100 299,682 300,1100 301,680 302,1102 305,1085 310,1070 313,1100 314,680 318,900 321,940 328,950 335,960 345,980 350,992 356,975 361,968 366,910 372,880 378,862 385,880 395,900 405,920 415,935 428,945 445,940 452,952 460,968 470,945 480,922 492,914 500,920 512,940 522,950 532,942 545,918 555,909 565,925 578,932 590,935 605,955 618,985 632,1015 640,1022 653,1022 656,1037 664,1033 672,1015 675,990 680,980 686,990 692,1015 700,1035 712,1058 725,1074 740,1078 755,1086 770,1090 785,1084 800,1072 815,1072 830,1060 842,1050 855,1056 870,1065 885,1070 900,1058 912,1053 922,1062 935,1078 950,1077 965,1075 980,1084 1000,1086 1020,1085 1040,1092 1055,1095 1062,1104 1062,682 1075,684 1087,682 1087,1100 1100,1092 1115,1087 1130,1095 1139,1102 1139,680 1150,690 1165,715 1180,733 1190,725 1200,700 1215,684 1230,690 1245,702 1260,708 1275,713 1290,715 1305,716 1318,722 1330,740 1345,760 1360,780 1370,798 1382,805 1390,818 1400,800 1410,750 1420,742 1430,736 1445,735 1460,745 1475,762 1490,766 1500,755 1517,747"]
  ]
});
chart("coherence", {
  size: [650, 188], box: [56, 5, 649, 137], grid: [168, 70, 1517, 466], xt: 18.56, yt: 6, title: "Coherence", titleX: 14, foot: "Frequency (Hz)", area: true,
  xs: hz(56, 92.8),
  ys: [[1, 17], ["0.75", 47], ["0.5", 77], ["0.25", 107], [0, 137, 130]],
  traces: [["average", "168,106 171,210 174,106 184,106 186,152 189,108 210,108 213,145 217,115 221,140 225,110 229,108 233,113 240,108 290,108 294,115 300,106 308,106 312,115 314,180 316,400 318,180 321,147 326,150 330,137 334,145 338,130 344,128 350,145 355,153 360,160 363,218 366,165 370,135 378,118 390,112 420,108 450,106 490,106 505,112 530,114 545,107 600,106 715,107 730,113 765,113 790,106 835,107 850,114 880,115 905,110 950,114 965,107 1015,106 1030,110 1060,110 1080,112 1095,118 1110,114 1135,110 1150,116 1168,125 1180,150 1192,162 1200,150 1208,135 1222,122 1235,130 1250,132 1265,122 1285,120 1300,108 1325,106 1340,118 1345,130 1350,160 1355,178 1360,165 1366,155 1371,180 1376,208 1381,186 1387,210 1393,212 1398,240 1406,265 1413,230 1420,175 1430,125 1437,110 1450,108 1465,116 1475,130 1490,138 1498,124 1507,125 1513,108 1517,106"]]
});

// Level rings: percentage of the circle filled clockwise from the top.
function ring(axis, level, color, rest) {
  const arc = (from, len, col) => `<circle cx="19" cy="19" r="14" fill="none" stroke="${col}" stroke-width="9" pathLength="100" stroke-dasharray="${len} 100" stroke-dashoffset="${-from}" transform="rotate(-90 19 19)"/>`;
  return `<svg class="ring ${axis.toLowerCase()}" width="38" height="38">${arc(0, 100, "#d2d2d2")}${rest ? arc(level, rest, "#828282") : ""}${arc(0, level, color)}<text x="19" y="23">${axis}</text></svg>`;
}
const groups = [
  ["Sources", [[1, ["X", 43, "#00f000", 24]]]],
  ["EPS VP1", [[1, ["X", 96, "#ff5a00"], ["Z", 87, "#ffb800"], ["Y", 87, "#ffb800"]], [2, ["X", 87, "#ffb400"], ["Z", 99, "#ff0000"], ["Y", 88, "#ffac00"]], [3, ["X", 72, "#ffff00"], ["Z", 77, "#fff000"], ["Y", 79, "#ffe800"]]]],
  ["EPS VP2", [[4, ["X", 81, "#ffd400"], ["Z", 80, "#ffe000"], ["Y", 73, "#ffff00"]], [5, ["X", 97, "#ff3c00"], ["Z", 86, "#ffbe00"], ["Y", 83, "#ffd000"]], [6, ["X", 5, "#12e012"], ["Z", 0, "#d2d2d2"], ["Y", 5, "#12e012"]]]]
];
document.getElementById("groups").innerHTML = groups.map(([name, slots]) =>
  `<div class="group"><h3>${name}</h3><div class="slots">${slots.map(([n, ...rings]) =>
    `<div class="slot${rings.length < 2 ? " one" : ""}"><b>${n}</b>${rings.map(r => ring(...r)).join("")}</div>`).join("")}</div></div>`).join("");
```
